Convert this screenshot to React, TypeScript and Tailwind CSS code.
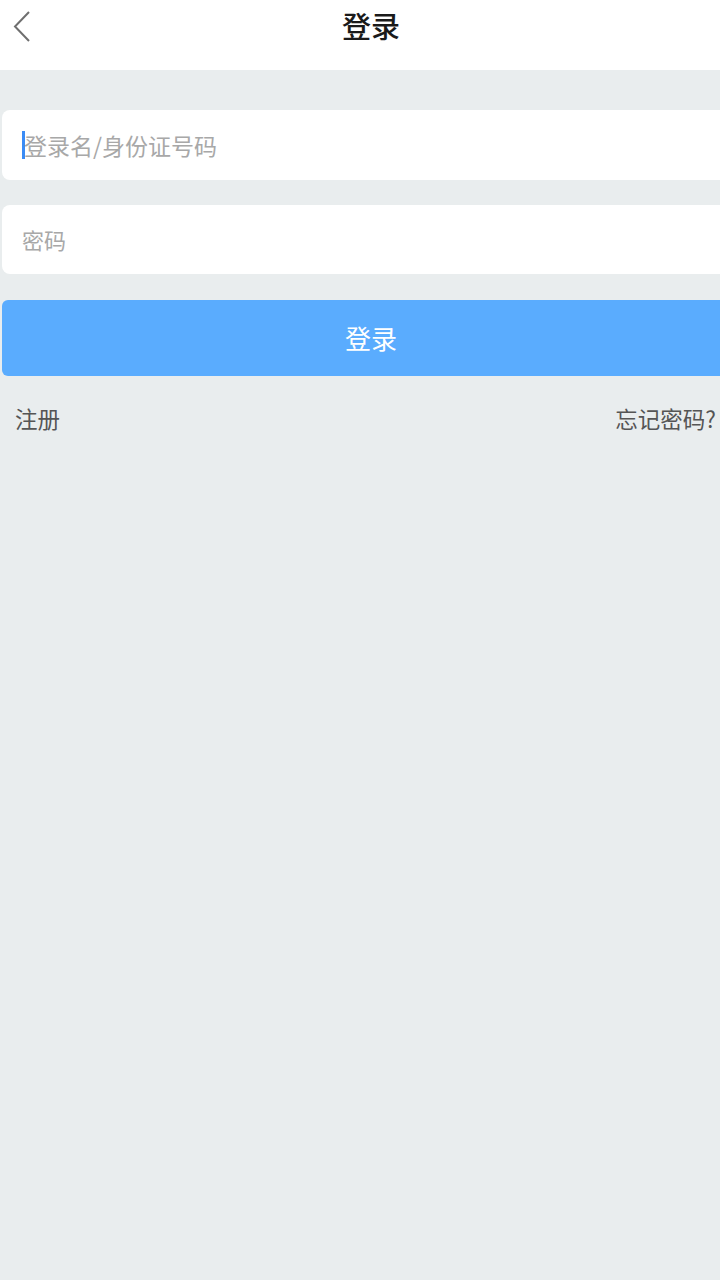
import React from "react";

export default function App() {
  const font = { fontFamily: '"Noto Sans CJK SC", "Noto Sans", sans-serif' };
  return (
    <div className="w-[720px] h-[1280px] bg-[#e9edee] flex flex-col" style={font}>
      <div className="h-[70px] bg-white flex items-center relative">
        <svg className="absolute left-[10px] top-[10px]" width="24" height="34" viewBox="0 0 24 34">
          <path d="M19 2 L5 16.5 L19 31" fill="none" stroke="#6f6f6f" strokeWidth="2" />
        </svg>
        <div className="flex-1 text-center text-[29px] font-medium text-[#1a1a1a] leading-none pb-[20px] pl-[22px]">登录</div>
      </div>
      <div className="pl-[2px] pt-[40px] flex flex-col">
        <div className="h-[70px] bg-white rounded-l-[8px] flex items-center pl-[20px]">
          <div className="w-[3px] h-[28px] bg-[#3b8cf6] mr-[-1px]" />
          <span className="text-[23px] text-[#a8a8a8]">登录名/身份证号码</span>
        </div>
        <div className="h-[69px] mt-[25px] bg-white rounded-l-[8px] flex items-center pl-[20px]">
          <span className="text-[22px] text-[#a8a8a8]">密码</span>
        </div>
        <div className="h-[76px] mt-[26px] bg-[#5aacfe] rounded-l-[6px] flex items-center justify-center pl-[20px]">
          <span className="text-[26px] text-white pb-[2px]">登录</span>
        </div>
        <div className="mt-[26px] flex justify-between items-center pl-[13px] pr-[4px]">
          <span className="text-[22.5px] text-[#555555]">注册</span>
          <span className="text-[22.5px] text-[#555555]">忘记密码?</span>
        </div>
      </div>
    </div>
  );
}
